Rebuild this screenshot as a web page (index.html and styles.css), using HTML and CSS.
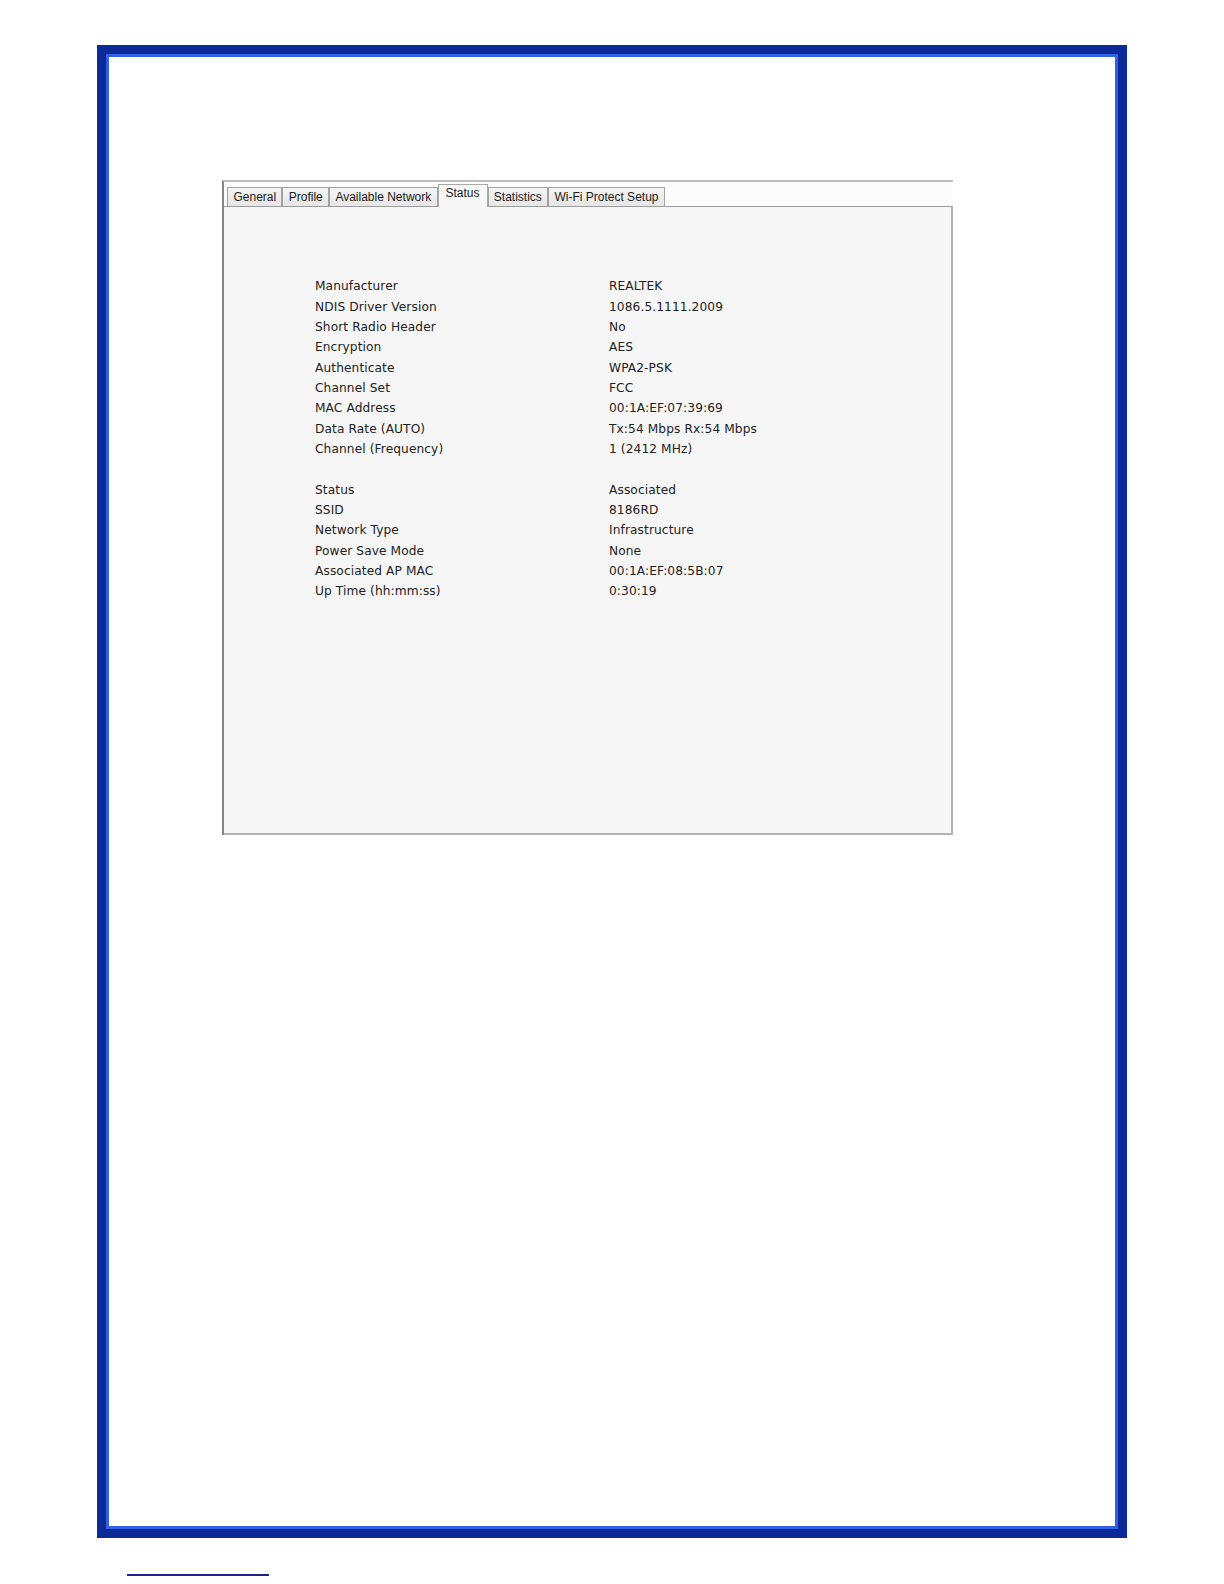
FILE: index.html
```html
<!DOCTYPE html>
<html>
<head>
<meta charset="utf-8">
<title>Status</title>
<link rel="stylesheet" href="styles.css">
</head>
<body>
<div class="frame">
  <div class="dialog">
    <div class="tabs">
      <div class="tab">General</div>
      <div class="tab">Profile</div>
      <div class="tab">Available Network</div>
      <div class="tab active">Status</div>
      <div class="tab">Statistics</div>
      <div class="tab">Wi-Fi Protect Setup</div>
    </div>
    <div class="content">
      <div class="info">
        <div class="label">Manufacturer</div><div class="value">REALTEK</div>
        <div class="label">NDIS Driver Version</div><div class="value">1086.5.1111.2009</div>
        <div class="label">Short Radio Header</div><div class="value">No</div>
        <div class="label">Encryption</div><div class="value">AES</div>
        <div class="label">Authenticate</div><div class="value">WPA2-PSK</div>
        <div class="label">Channel Set</div><div class="value">FCC</div>
        <div class="label">MAC Address</div><div class="value">00:1A:EF:07:39:69</div>
        <div class="label">Data Rate (AUTO)</div><div class="value">Tx:54 Mbps Rx:54 Mbps</div>
        <div class="label">Channel (Frequency)</div><div class="value">1 (2412 MHz)</div>
        <div class="spacer"></div>
        <div class="label">Status</div><div class="value">Associated</div>
        <div class="label">SSID</div><div class="value">8186RD</div>
        <div class="label">Network Type</div><div class="value">Infrastructure</div>
        <div class="label">Power Save Mode</div><div class="value">None</div>
        <div class="label">Associated AP MAC</div><div class="value">00:1A:EF:08:5B:07</div>
        <div class="label">Up Time (hh:mm:ss)</div><div class="value">0:30:19</div>
      </div>
    </div>
  </div>
</div>
<div class="footline"></div>
</body>
</html>
```
FILE: styles.css
```css
html, body {
  margin: 0;
  padding: 0;
  background: #ffffff;
}

body {
  font-family: "DejaVu Sans", Verdana, sans-serif;
}

.frame {
  box-sizing: border-box;
  margin-left: 97px;
  margin-top: 45px;
  width: 1030px;
  height: 1493px;
  border: 9px solid #0b2a98;
  box-shadow: inset 0 0 0 3px #3262e4;
  background: #ffffff;
  padding-top: 125.5px;
  padding-left: 116px;
}

.dialog {
  width: 731px;
  box-sizing: border-box;
  border-top: 2px solid #bdbdbd;
  border-left: 2px solid #858585;
  background: #fcfcfc;
}

.tabs {
  display: flex;
  align-items: flex-end;
  height: 24px;
  padding-left: 3.2px;
  font-family: "Liberation Sans", Arial, sans-serif;
  font-size: 12px;
  color: #1c1c1c;
}

.tab {
  box-sizing: border-box;
  height: 19px;
  line-height: 18px;
  padding: 0 5.3px;
  border: 1px solid #a2a2a2;
  border-bottom: none;
  background: linear-gradient(#f4f4f4, #e6e6e6);
  white-space: nowrap;
}

.tab.active {
  position: relative;
  z-index: 1;
  height: 23px;
  margin-bottom: -1px;
  line-height: 16px;
  padding: 0 7px;
  background: #f7f7f7;
  border-color: #a8a8a8;
}

.content {
  box-sizing: border-box;
  height: 629.5px;
  border-top: 1px solid #9c9c9c;
  border-right: 2px solid #b2b2b2;
  border-bottom: 2px solid #b2b2b2;
  background: #f6f6f6;
  padding-top: 69.9px;
  padding-left: 91px;
}

.info {
  display: grid;
  grid-template-columns: 294px auto;
  font-size: 12.2px;
  letter-spacing: 0.1px;
  line-height: 20.33px;
  color: #222222;
}

.spacer {
  grid-column: 1 / 3;
  height: 20.33px;
}

.footline {
  margin-left: 127px;
  margin-top: 36.3px;
  width: 142px;
  height: 1.5px;
  background: #1c248a;
}
```
